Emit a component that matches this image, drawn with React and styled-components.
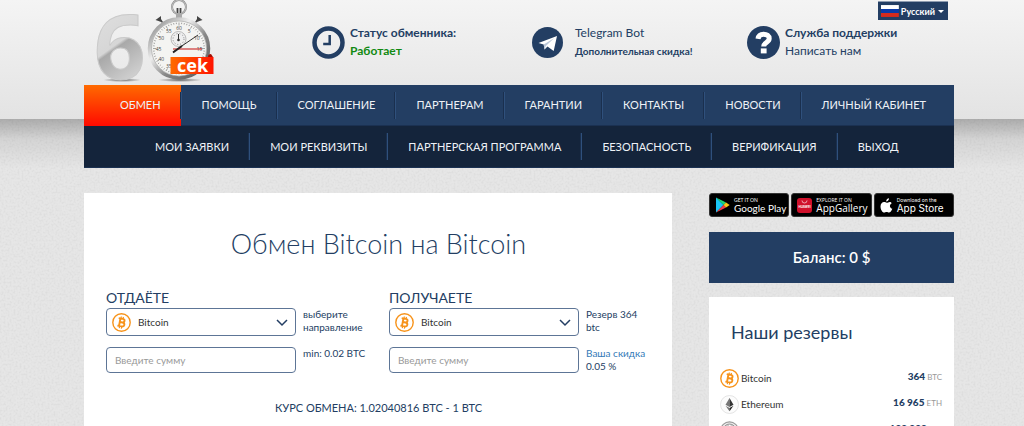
import React from "react";
import styled, { createGlobalStyle, css } from "styled-components";

const navy = "#233e63";

const GlobalStyle = createGlobalStyle`
  *, *::before, *::after { box-sizing: border-box; }
  html, body { margin: 0; }
  body {
    background: #e6e6e6;
    color: ${navy};
    font-family: Lato, "Open Sans", sans-serif;
    font-size: 10px;
  }
  a { color: inherit; text-decoration: none; }
  ul, h1, h2, p { margin: 0; padding: 0; }
  ul { list-style: none; }
  button, input, select { font: inherit; color: inherit; }
`;

const Page = styled.div`
  position: relative;
  height: 100vh;
  overflow: hidden;
  padding-left: 14px;
`;

const Texture = styled.svg`
  position: absolute;
  inset: 0;
  width: 100%;
  height: 100%;
`;

const HeaderBand = styled.div`
  position: absolute;
  inset: 0 0 auto 0;
  height: 119px;
  background: linear-gradient(#f4f4f4, #e3e3e3);
`;

const BandShadow = styled.div`
  position: absolute;
  inset: 119px 0 auto 0;
  height: 50px;
  background: linear-gradient(rgba(0, 0, 0, 0.25), rgba(0, 0, 0, 0.08) 40%, transparent);
`;

const Container = styled.div`
  position: relative;
  width: 100%;
  max-width: 870px;
  margin: 0 auto;
`;

const Header = styled.header`
  display: grid;
  grid-template-columns: 228px 220px 215px 1fr;
  height: 85px;
`;

const LogoLink = styled.a`
  display: block;
  padding-left: 10px;
  svg { display: block; overflow: visible; }
`;

const InfoItem = styled.div`
  display: flex;
  align-items: center;
  align-self: start;
  gap: ${(p) => p.$gap}px;
  padding-top: 24px;
  line-height: 18px;
  font-size: 12px;
  svg { flex: none; display: block; }
`;

const InfoLine = styled.a`
  display: block;
  white-space: nowrap;
  font-weight: ${(p) => (p.$bold ? 700 : 400)};
  font-size: ${(p) => (p.$small ? 10 : 12)}px;
  color: ${(p) => (p.$ok ? "#128a12" : navy)};
`;

const LanguageButton = styled.button`
  position: absolute;
  top: 1px;
  right: 6px;
  display: flex;
  align-items: center;
  gap: 2px;
  width: 70px;
  height: 19px;
  padding: 0 4px 0 3px;
  border: 0;
  border-top: 1px solid #8e9cb0;
  background: ${navy};
  color: #fff;
  font-size: 9px;
  font-weight: 700;
  white-space: nowrap;
`;

const Caret = styled.span`
  border: 3px solid transparent;
  border-top-color: #fff;
  border-bottom: 0;
  margin-left: 1px;
`;

const Menu = styled.ul`
  display: flex;
  align-items: center;
  height: ${(p) => (p.$dark ? 42 : 41)}px;
  background: ${(p) => (p.$dark ? "#14243b" : navy)};
  padding-left: ${(p) => (p.$dark ? 51 : 0)}px;
  border-bottom: 1px solid #1b3152;
`;

const MenuItem = styled.li`
  display: flex;
  align-items: center;
  height: 27px;
  border-left: 1px solid #2f507c;
  box-shadow: -1px 0 #1a2f4e;
  &:first-child { border-left: 0; box-shadow: none; }
  ${(p) =>
    p.$active &&
    css`
      height: 41px;
      background: linear-gradient(#ff6a00, #ff0a00);
      padding-left: 16px;
    `}
`;

const MenuLink = styled.a`
  padding: 0 20px;
  font-size: 11px;
  line-height: 14px;
  color: #eef2f7;
  white-space: nowrap;
`;

const Content = styled.div`
  display: grid;
  grid-template-columns: 588fr 245fr;
  gap: 37px;
  padding-top: 25px;
`;

const ExchangeCard = styled.main`
  background: #fff;
  padding: 34px 21px 24px 22px;
  min-height: 280px;
`;

const Title = styled.h1`
  text-align: center;
  font-size: 27px;
  line-height: 34px;
  font-weight: 300;
`;

const Sides = styled.div`
  display: grid;
  grid-template-columns: 1fr 1fr;
  gap: 21px;
  padding-top: 28px;
`;

const SideTitle = styled.label`
  display: block;
  font-size: 14px;
  line-height: 18px;
  height: 19px;
`;

const FieldRow = styled.div`
  display: grid;
  grid-template-columns: 190fr 65fr;
  gap: 7px;
  min-height: 39px;
  align-items: start;
`;

const SelectBox = styled.div`
  position: relative;
  svg { position: absolute; top: 5px; pointer-events: none; }
  svg:first-child { left: 6px; }
  svg:last-child { top: 11px; right: 8px; }
`;

const fieldBox = css`
  display: block;
  width: 100%;
  border: 1px solid #5d7596;
  border-radius: 4px;
  background: #fff;
`;

const Select = styled.select`
  ${fieldBox}
  appearance: none;
  height: 28px;
  padding: 0 28px 0 31px;
  color: #333;
`;

const AmountInput = styled.input`
  ${fieldBox}
  height: 26px;
  padding: 0 8px;
  &::placeholder { color: #999; opacity: 1; }
`;

const Note = styled.p`
  line-height: 13px;
  a { color: #337ab7; }
`;

const Rate = styled.p`
  padding-top: 15px;
  text-align: center;
  font-size: 11px;
  line-height: 14px;
`;

const Sidebar = styled.aside`
  min-width: 0;
`;

const Stores = styled.div`
  display: grid;
  grid-template-columns: repeat(3, 1fr);
  gap: 2px;
`;

const StoreLink = styled.a`
  display: flex;
  align-items: center;
  gap: 4px;
  height: 24px;
  padding-left: 5px;
  border-radius: 3px;
  border: 1px solid #333;
  background: #000;
  color: #fff;
  font-size: 10px;
  line-height: 10px;
  white-space: nowrap;
  font-family: ${(p) => p.$font};
  svg { flex: none; }
`;

const StoreCaption = styled.span`
  display: block;
  font-size: 5px;
  line-height: 6px;
`;

const Balance = styled.div`
  margin-top: 15px;
  background: ${navy};
  color: #fff;
  text-align: center;
  font-size: 15px;
  font-weight: 600;
  line-height: 51px;
`;

const ReservesCard = styled.section`
  margin-top: 14px;
  background: #fff;
  padding: 24px 12px 12px 11px;
`;

const ReservesTitle = styled.h2`
  padding: 0 0 22px 11px;
  font-size: 18px;
  line-height: 22px;
  font-weight: 400;
`;

const ReserveRow = styled.li`
  display: flex;
  align-items: center;
  gap: 2px;
  height: 26px;
  color: #333;
  svg { flex: none; }
`;

const Amount = styled.span`
  margin-left: auto;
  padding-bottom: 4px;
  color: #999;
  font-size: 8px;
  b { color: ${navy}; font-size: 10px; font-weight: 900; }
`;

function Logo() {
  const ticks = Array.from({ length: 60 }, (_, i) => i);
  const labels = ["60", "5", "10", "15", "", "", "", "35", "40", "45", "50", "55"];
  return (
    <svg width="122" height="85" viewBox="0 0 122 85" role="img" aria-label="60 cek">
      <defs>
        <linearGradient id="digit" x1="0" y1="0" x2="0.3" y2="1">
          <stop offset="0" stopColor="#c0c0c0" />
          <stop offset="0.35" stopColor="#dcdcdc" />
          <stop offset="0.58" stopColor="#d6d6d6" />
          <stop offset="0.61" stopColor="#a9a9a9" />
          <stop offset="1" stopColor="#dadada" />
        </linearGradient>
        <linearGradient id="metal" x1="0" y1="0" x2="1" y2="1">
          <stop offset="0" stopColor="#777" />
          <stop offset="0.35" stopColor="#eee" />
          <stop offset="0.6" stopColor="#888" />
          <stop offset="1" stopColor="#555" />
        </linearGradient>
        <linearGradient id="tag">
          <stop offset="0" stopColor="#ff6a00" />
          <stop offset="1" stopColor="#ff1400" />
        </linearGradient>
        <radialGradient id="ground">
          <stop offset="0" stopColor="#444" stopOpacity="0.8" />
          <stop offset="1" stopColor="#444" stopOpacity="0" />
        </radialGradient>
      </defs>
      <ellipse cx="28" cy="80" rx="19" ry="2" fill="url(#ground)" />
      <ellipse cx="86" cy="80" rx="22" ry="2" fill="url(#ground)" />
      <text x="0" y="79" fontFamily="Open Sans" fontWeight="700" fontSize="90" fill="url(#digit)" stroke="#cacaca" strokeWidth="1">6</text>
      <circle cx="85" cy="7" r="7" fill="none" stroke="#8a8a8a" strokeWidth="2" />
      <circle cx="85" cy="7" r="7" fill="none" stroke="#ddd" strokeWidth="0.7" />
      <rect x="82" y="8" width="6" height="11" fill="#aaa" />
      <path d="M83.500 8v5M86.500 8v5" stroke="#444" />
      <path d="M61.500 20l5.500-4 0 3 2 3 3 2-1 1-4-3-2.500-1z" fill="#444" />
      <path d="M108.500 20l-5.500-4 0 3-2 3-3 2 1 1 4-3 2.500-1z" fill="#444" />
      <circle cx="85" cy="48.500" r="29.500" fill="#f4f4f2" stroke="url(#metal)" strokeWidth="3.500" />
      <circle cx="85" cy="48.500" r="27.500" fill="none" stroke="#999" strokeWidth="0.6" />
      <g stroke="#555" strokeWidth="0.5">
        {ticks.map((i) => (
          <path key={i} d={i % 5 ? "M85 22.500v1.500" : "M85 22.500v3"} transform={`rotate(${i * 6} 85 48.500)`} />
        ))}
      </g>
      <g fontFamily="Open Sans" fontSize="5" fill="#444" textAnchor="middle">
        {labels.map((t, i) => {
          const a = (i * Math.PI) / 6;
          return t ? <text key={t} x={85 + 20.5 * Math.sin(a)} y={50.5 - 20.5 * Math.cos(a)}>{t}</text> : null;
        })}
      </g>
      <circle cx="84.500" cy="39" r="7.500" fill="#efefef" stroke="#aaa" strokeWidth="0.8" />
      <circle cx="84.500" cy="39" r="5.500" fill="none" stroke="#888" strokeDasharray="1 1.900" />
      <path d="M84.500 34v6" stroke="#333" />
      <circle cx="84.500" cy="40" r="1.300" fill="#333" />
      <path d="M79 49h29" stroke="#c33" strokeWidth="1.200" />
      <path d="M79 52L104 35" stroke="#333" />
      <path d="M79 52.500L88 46" stroke="#222" strokeWidth="2" />
      <path d="M114 57q0-3 3-3l2 3z" fill="#a50d00" />
      <rect x="76.500" y="57" width="43" height="17" fill="url(#tag)" />
      <text x="83" y="71.500" fontFamily="Open Sans" fontWeight="700" fontSize="18" fill="#fff">cek</text>
    </svg>
  );
}

const ClockIcon = () => (
  <svg width="33" height="33" viewBox="0 0 33 33">
    <circle cx="16.500" cy="16.500" r="14" fill="none" stroke={navy} strokeWidth="4.500" />
    <path d="M17.700 9v9h-6.500" fill="none" stroke={navy} strokeWidth="2.500" />
  </svg>
);

const TelegramIcon = () => (
  <svg width="31" height="31" viewBox="0 0 31 31">
    <circle cx="15.500" cy="15.500" r="15.500" fill={navy} />
    <path d="M6.500 16L25 9l-3.300 15-6.200-4.400-3 3-.8-5.200z" fill="#fff" />
    <path d="M11.700 17.400L22 11.200l-8.200 7.800-1.300 3.600z" fill="#b9c6d8" />
  </svg>
);

const HelpIcon = () => (
  <svg width="33" height="33" viewBox="0 0 33 33">
    <circle cx="16.500" cy="16.500" r="16.500" fill={navy} />
    <path d="M11 12.800C11.500 9.500 13.700 8.200 16.600 8.200c3.200 0 5.600 1.600 5.600 4.400 0 4.100-5.500 3.800-5.500 8" fill="none" stroke="#fff" strokeWidth="5" />
    <rect x="13.800" y="22.400" width="5.800" height="5" fill="#fff" />
  </svg>
);

const Flag = () => (
  <svg width="18" height="12" viewBox="0 0 18 12">
    <path fill="#fff" d="M0 0h18v4H0z" />
    <path fill="#0a3aa8" d="M0 4h18v4H0z" />
    <path fill="#d52b1e" d="M0 8h18v4H0z" />
  </svg>
);

const BitcoinIcon = () => (
  <svg width="19" height="19" viewBox="0 0 19 19">
    <circle cx="9.500" cy="9.500" r="8.700" fill="#fff" stroke="#f7931a" strokeWidth="1.400" />
    <g transform="rotate(10 9.500 9.500)" fill="none" stroke="#f7931a">
      <path d="M6 5.700h4.200q2 0 2 1.800t-2 1.800H7.700h2.800q2.200 0 2.200 2t-2.200 2H6M7.700 5.700v7.600" strokeWidth="1.900" />
      <path d="M8.300 3.600v2M10.400 3.600v2M8.300 13.300v2.200M10.400 13.300v2.200" strokeWidth="1.200" />
    </g>
  </svg>
);

const EthereumIcon = () => (
  <svg width="19" height="19" viewBox="0 0 19 19">
    <circle cx="9.500" cy="9.500" r="9" fill="#fcfcfc" stroke="#ddd" strokeWidth="0.800" />
    <path d="M9.500 3L5.500 9.800l4 2.300z" fill="#777" />
    <path d="M9.500 3l4 6.800-4 2.300z" fill="#333" />
    <path d="M5.500 10.700l4 5.500V13z" fill="#777" />
    <path d="M13.500 10.700l-4 5.500V13z" fill="#222" />
  </svg>
);

const LitecoinIcon = () => (
  <svg width="19" height="19" viewBox="0 0 19 19">
    <circle cx="9.500" cy="9.500" r="8.700" fill="#eee" stroke="#999" strokeWidth="1.200" />
    <circle cx="9.500" cy="9.500" r="6.500" fill="#ccc" stroke="#999" />
    <path d="M10 4L8 13h5M6.500 10.500l5-2.500" fill="none" stroke="#fff" strokeWidth="1.600" />
  </svg>
);

const Chevron = () => (
  <svg width="12" height="8" viewBox="0 0 12 8">
    <path d="M1 1l5 5 5-5" fill="none" stroke={navy} strokeWidth="1.500" />
  </svg>
);

const PlayIcon = () => (
  <svg width="15" height="16" viewBox="0 0 15 16">
    <path d="M1 .5v15L8.500 8z" fill="#19c5f5" />
    <path d="M1 .5L8.500 8l2.500-2.500z" fill="#1fd67a" />
    <path d="M1 15.500L8.500 8l2.500 2.500z" fill="#ee3b4b" />
    <path d="M11 5.500l3.700 2.500-3.700 2.500L8.500 8z" fill="#fdc814" />
  </svg>
);

const HuaweiIcon = () => (
  <svg width="15" height="15" viewBox="0 0 15 15">
    <rect width="15" height="15" rx="3" fill="#d0112b" />
    <path d="M5 2.500q0 2.500 2.500 2.500T10 2.500" fill="none" stroke="#fff" strokeWidth="0.600" />
    <text x="7.500" y="9.500" textAnchor="middle" fontFamily="Inter" fontWeight="700" fontSize="3" fill="#fff">HUAWEI</text>
  </svg>
);

const AppleIcon = () => (
  <svg width="13" height="15" viewBox="0 0 13 15">
    <path d="M9 .3c.1 1.700-1.300 3.200-2.800 3.200C6 1.900 7.500.4 9 .3zM11.700 5.200C8.900 7 9.700 9.900 12.300 10.800c-.8 2-2 3.800-3.300 3.800-1 0-1.300-.6-2.400-.6s-1.500.6-2.400.6C2.300 14.600.5 11.300.5 8.500.5 5.600 2.300 4 4 4c1.200 0 1.900.7 2.800.7S8.400 3.900 9.800 3.900c.8 0 1.500.5 1.900 1.300z" fill="#fff" />
  </svg>
);

const mainMenu = ["ОБМЕН", "ПОМОЩЬ", "СОГЛАШЕНИЕ", "ПАРТНЕРАМ", "ГАРАНТИИ", "КОНТАКТЫ", "НОВОСТИ", "ЛИЧНЫЙ КАБИНЕТ"];
const userMenu = ["МОИ ЗАЯВКИ", "МОИ РЕКВИЗИТЫ", "ПАРТНЕРСКАЯ ПРОГРАММА", "БЕЗОПАСНОСТЬ", "ВЕРИФИКАЦИЯ", "ВЫХОД"];
const reserves = [
  { name: "Bitcoin", amount: "364", unit: "BTC", Icon: BitcoinIcon },
  { name: "Ethereum", amount: "16 965", unit: "ETH", Icon: EthereumIcon },
  { name: "Litecoin", amount: "100 000", unit: "LTC", Icon: LitecoinIcon },
];

function ExchangeSide({ id, title, note, amountNote }) {
  return (
    <div>
      <SideTitle htmlFor={id}>{title}</SideTitle>
      <FieldRow>
        <SelectBox>
          <BitcoinIcon />
          <Select id={id} defaultValue="Bitcoin">
            <option>Bitcoin</option>
            <option>Ethereum</option>
          </Select>
          <Chevron />
        </SelectBox>
        <Note>{note}</Note>
      </FieldRow>
      <FieldRow>
        <AmountInput placeholder="Введите сумму" aria-label={`${title}: сумма`} />
        <Note>{amountNote}</Note>
      </FieldRow>
    </div>
  );
}

export default function App() {
  return (
    <Page>
      <GlobalStyle />
      <Texture aria-hidden="true">
        <filter id="grain">
          <feTurbulence type="fractalNoise" baseFrequency="0.5" numOctaves="2" seed="4" />
          <feColorMatrix values="0 0 0 0 0  0 0 0 0 0  0 0 0 0 0  0.3 0 0 0 -0.120" />
        </filter>
        <rect width="100%" height="100%" filter="url(#grain)" opacity="0.3" />
      </Texture>
      <BandShadow />
      <HeaderBand />
      <Container>
        <Header>
          <LogoLink href="#"><Logo /></LogoLink>
          <InfoItem $gap={5}>
            <ClockIcon />
            <div>
              <InfoLine as="span" $bold>Статус обменника:</InfoLine>
              <InfoLine as="span" $bold $ok>Работает</InfoLine>
            </div>
          </InfoItem>
          <InfoItem $gap={12}>
            <TelegramIcon />
            <div>
              <InfoLine href="#">Telegram Bot</InfoLine>
              <InfoLine href="#" $bold $small>Дополнительная скидка!</InfoLine>
            </div>
          </InfoItem>
          <InfoItem $gap={5}>
            <HelpIcon />
            <div>
              <InfoLine as="span" $bold>Служба поддержки</InfoLine>
              <InfoLine href="#">Написать нам</InfoLine>
            </div>
          </InfoItem>
        </Header>
        <LanguageButton type="button"><Flag />Русский<Caret /></LanguageButton>
        <nav>
          <Menu>
            {mainMenu.map((t, i) => (
              <MenuItem key={t} $active={i === 0}><MenuLink href="#">{t}</MenuLink></MenuItem>
            ))}
          </Menu>
          <Menu $dark>
            {userMenu.map((t) => (
              <MenuItem key={t}><MenuLink href="#">{t}</MenuLink></MenuItem>
            ))}
          </Menu>
        </nav>
        <Content>
          <ExchangeCard>
            <Title>Обмен Bitcoin на Bitcoin</Title>
            <Sides>
              <ExchangeSide id="give" title="ОТДАЁТЕ" note="выберите направление" amountNote="min: 0.02 BTC" />
              <ExchangeSide id="get" title="ПОЛУЧАЕТЕ" note="Резерв 364 btc" amountNote={<><a href="#">Ваша скидка</a> 0.05 %</>} />
            </Sides>
            <Rate>КУРС ОБМЕНА: 1.02040816 BTC - 1 BTC</Rate>
          </ExchangeCard>
          <Sidebar>
            <Stores>
              <StoreLink href="#" $font="Lato, sans-serif">
                <PlayIcon />
                <span><StoreCaption>GET IT ON</StoreCaption>Google Play</span>
              </StoreLink>
              <StoreLink href="#" $font='"Open Sans", sans-serif'>
                <HuaweiIcon />
                <span><StoreCaption>EXPLORE IT ON</StoreCaption>AppGallery</span>
              </StoreLink>
              <StoreLink href="#" $font="Inter, sans-serif">
                <AppleIcon />
                <span><StoreCaption>Download on the</StoreCaption>App Store</span>
              </StoreLink>
            </Stores>
            <Balance>Баланс: 0 $</Balance>
            <ReservesCard>
              <ReservesTitle>Наши резервы</ReservesTitle>
              <ul>
                {reserves.map(({ name, amount, unit, Icon }) => (
                  <ReserveRow key={name}>
                    <Icon />
                    <span>{name}</span>
                    <Amount><b>{amount}</b> {unit}</Amount>
                  </ReserveRow>
                ))}
              </ul>
            </ReservesCard>
          </Sidebar>
        </Content>
      </Container>
    </Page>
  );
}
